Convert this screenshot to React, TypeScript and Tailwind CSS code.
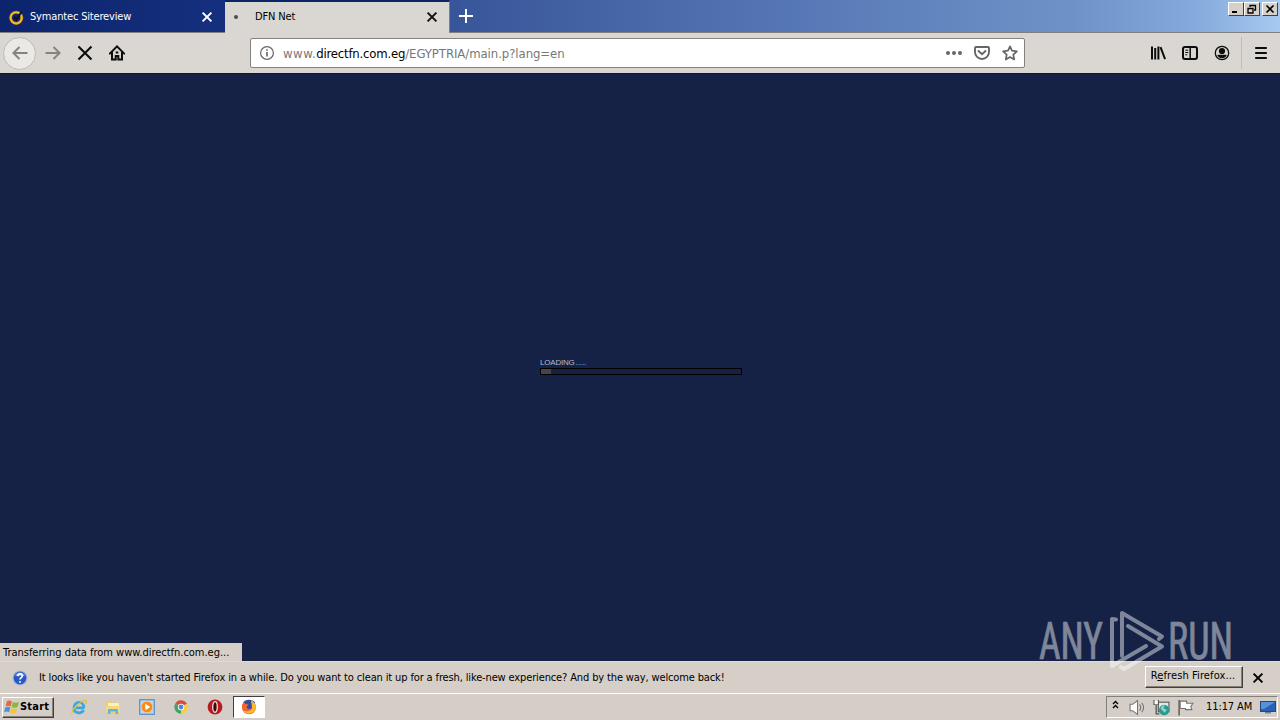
import type { ReactNode } from 'react';

const UI_FONT = "font-['DejaVu_Sans_Condensed','DejaVu_Sans',sans-serif] [font-stretch:condensed]";

function Svg({ size = 16, children, className = '' }: { size?: number; children: ReactNode; className?: string }) {
    return (
        <svg width={size} height={size} viewBox="0 0 16 16" fill="none" stroke="currentColor" strokeWidth="2" className={`block shrink-0 ${className}`}>
            {children}
        </svg>
    );
}

function CloseIcon({ className = '' }: { className?: string }) {
    return (
        <Svg className={className}>
            <path d="M3.6 3.6l8.8 8.8M12.4 3.6l-8.8 8.8" />
        </Svg>
    );
}

function WindowButton({ children }: { children: ReactNode }) {
    return (
        <div className="flex h-[14px] w-4 items-center justify-center border border-t-white border-r-[#404040] border-b-[#404040] border-l-white bg-[#d6d0c8] text-black">
            <svg width="12" height="10" viewBox="0 0 12 10" fill="none" stroke="currentColor">{children}</svg>
        </div>
    );
}

function TabStrip() {
    return (
        <div className="flex h-[33px] border-b border-[#808080] bg-[linear-gradient(90deg,#0c246c_0%,#15307f_18%,#38569a_36%,#5677b5_62%,#6f93c8_84%,#83a8da_93%,#a6caf0_100%)]">
            <div className="flex w-[225px] items-center pt-0.5 pl-2">
                <Svg className="text-[#f5b92c]">
                    <circle cx="8.2" cy="8.8" r="5.6" stroke="#8b6a24" strokeWidth="3" />
                    <circle cx="8.2" cy="8.8" r="5.6" />
                    <path d="M6 8l2.3 2.7L13.5 3" stroke="#0a0f24" />
                </Svg>
                <span className="ml-1.5 w-[169px] text-[11px] tracking-[-0.17px] text-white">Symantec Sitereview</span>
                <CloseIcon className="text-white" />
            </div>
            <div className="h-[33px] w-[225px] border-t-2 border-r border-t-[#0a2565] border-r-[#808080] bg-[#dad7d2]">
                <div className="flex h-[30px] items-center pl-[9px]">
                    <div className="size-1 rounded-full bg-[#4e4c4a]" />
                    <span className="ml-[17px] w-[169px] pt-px text-[11px] tracking-[-0.15px] text-black">DFN Net</span>
                    <CloseIcon className="text-[#111]" />
                </div>
            </div>
            <div className="flex w-8 items-center justify-center text-white">
                <Svg><path d="M8 1v14M1 8h14" /></Svg>
            </div>
            <div className="mt-0.5 mr-0.5 ml-auto flex">
                <WindowButton><path d="M2 8h5" strokeWidth="2" /></WindowButton>
                <WindowButton><path d="M4 3V1.5h5.5V6H8M2 4.5h5V9H2zM4 1.5h5.5" strokeWidth="1.3" /></WindowButton>
                <div className="ml-0.5">
                    <WindowButton><path d="M2.5 1.5l7 7M9.5 1.5l-7 7" strokeWidth="1.7" /></WindowButton>
                </div>
            </div>
        </div>
    );
}

function AddressBar() {
    return (
        <div className="ml-[125px] flex h-[30px] w-[775px] items-center rounded-[2px] border border-[#85827e] bg-white pl-2">
            <Svg className="text-[#666]">
                <circle cx="8" cy="8" r="6.4" strokeWidth="1.2" />
                <path d="M8 7v4.5M8 4.2v1.6" strokeWidth="1.6" />
            </Svg>
            <span className="ml-2 w-[663px] pt-px text-[13px] tracking-[-0.06px] whitespace-nowrap text-[#777]">
                <span className="tracking-[0.5px]">www.</span>
                <span className="tracking-[-0.2px] text-black">directfn.com.eg</span>/EGYPTRIA/main.p?lang=en
            </span>
            <div className="flex gap-3 text-[#666]">
                <Svg>
                    <g fill="currentColor" stroke="none">
                        <circle cx="2" cy="8" r="2" /><circle cx="8" cy="8" r="2" /><circle cx="14" cy="8" r="2" />
                    </g>
                </Svg>
                <Svg>
                    <path d="M2 2h12a1 1 0 0 1 1 1v4a7 7 0 0 1-14 0V3a1 1 0 0 1 1-1zM4.5 6L8 9.3 11.5 6" strokeWidth="1.9" strokeLinecap="round" />
                </Svg>
                <Svg>
                    <path d="M8 1.3l2 4.4 4.9.6-3.6 3.3.9 4.9L8 12.1l-4.2 2.4.9-4.9L1.1 6.3 6 5.7z" strokeWidth="1.7" strokeLinejoin="round" />
                </Svg>
            </div>
        </div>
    );
}

function Toolbar() {
    return (
        <div className="flex h-10 items-center bg-[#dad7d2] text-[#0c0c0d]">
            <div className="ml-[3px] flex size-[33px] items-center justify-center rounded-full border border-[#bdbab5] bg-[#ebe9e6] text-[#85837f]">
                <Svg><path d="M15.5 8H1.5M7.500 2L1.400 8l6.100 6" /></Svg>
            </div>
            <Svg className="ml-[9px] text-[#85837f]"><path d="M.5 8h14M8.500 2l6.100 6-6.100 6" /></Svg>
            <Svg className="ml-4"><path d="M1.500 1.500l13 13M14.500 1.500l-13 13" strokeWidth="2.1" /></Svg>
            <Svg className="ml-4">
                <path d="M.8 8.600L8 1.400l7.200 7.200" strokeLinecap="round" />
                <path d="M3 7v7.500h3.700V11h2.600v3.500H13V7" />
                <path d="M6.700 7.500h2.600" />
            </Svg>
            <AddressBar />
            <div className="ml-[125px] flex gap-4">
                <Svg>
                    <path d="M2 1.500v13M5.200 3v11.500M8.400 1.500v13M10.500 2.200l4.600 12" />
                </Svg>
                <Svg>
                    <rect x="1" y="2" width="14" height="12" rx="2" />
                    <path d="M8.200 2v12" strokeWidth="1.5" />
                    <path d="M3.300 5.200h3M3.300 7.500h3M3.300 9.800h2" strokeWidth="1" />
                </Svg>
                <Svg>
                    <circle cx="8" cy="8" r="6.7" strokeWidth="1.3" />
                    <g fill="currentColor" stroke="none">
                        <circle cx="8" cy="6" r="3.1" />
                        <path d="M3.200 10.200C4.600 9.400 6 9.800 8 9.800s3.400-.4 4.800.4C11.800 12.300 10 13.200 8 13.200s-3.800-.9-4.800-3z" />
                    </g>
                </Svg>
            </div>
            <div className="ml-[11px] h-8 w-px bg-[#bfbcb7]" />
            <Svg className="ml-[11px]"><path d="M2.200 3h11.600M2.200 8h11.600M2.200 13h11.600" /></Svg>
        </div>
    );
}

function Watermark() {
    return (
        <svg
            width="204" height="66" viewBox="0 0 204 66"
            className="absolute top-[608px] left-[1034px] opacity-45"
        >
            <g fill="#fff" stroke="#fff" strokeWidth=".7" fontFamily="Roboto, sans-serif" fontSize="52">
                <text x="5" y="51" textLength="64" lengthAdjust="spacingAndGlyphs">ANY</text>
                <text x="134" y="51" textLength="65" lengthAdjust="spacingAndGlyphs">RUN</text>
            </g>
            <g fill="none" stroke="#fff" strokeWidth="4" strokeLinejoin="round" strokeLinecap="round">
                <path d="M82 11.500L78 11V58l34-20" />
                <path d="M88 48V5l40 23.500-3 2.500" />
                <path d="M94 18l34 20.500L90 61l-3-2" />
            </g>
        </svg>
    );
}

function Viewport() {
    return (
        <div className="flex h-[588px] flex-col border-t border-[#101831] bg-[#152246]">
            <div className="mt-[283px] ml-[540px] w-[202px]">
                <div className="flex h-[11px] items-center font-['Liberation_Sans',Arial,sans-serif] text-[8px] leading-[11px] text-[#b3bac9]">
                    <span className="tracking-[-0.2px]">LOADING</span><span className="ml-[1px] tracking-[-0.1px]">.....</span>
                </div>
                <div className="h-[7px] border border-black">
                    <div className="h-full w-[10px] bg-[#45464a]" />
                </div>
            </div>
            <div className="mt-auto flex h-[18px] w-[242px] items-center bg-[#d5cfc8] pt-0.5 pl-[3px] text-[11px] tracking-[-0.02px] whitespace-nowrap text-black">
                Transferring data from www.directfn.com.eg...
            </div>
        </div>
    );
}

function NotificationBar() {
    return (
        <div className="flex h-8 items-center border-t border-[#dcdadf] bg-[#d5cfc7] text-[11px] text-black">
            <Svg className="ml-3">
                <circle cx="8" cy="8" r="7" fill="#2858c4" stroke="#a9b8d9" strokeWidth="1.2" />
                <path d="M3 6a5.300 5.300 0 0 1 10 0z" fill="#779be5" stroke="none" />
                <path d="M5.800 6.200c0-3.200 4.600-3 4.600-.4C10.400 7.600 8 7.600 8 9.600M8 11v1.700" stroke="#fff" strokeWidth="1.700" />
            </Svg>
            <span className="ml-[11px] pt-px tracking-[-0.135px] whitespace-nowrap">
                It looks like you haven't started Firefox in a while. Do you want to clean it up for a fresh, like-new experience? And by the way, welcome back!
            </span>
            <div className="mr-[7px] mb-0.5 ml-auto flex h-[22px] w-[98px] items-center justify-center border border-t-white border-r-[#404040] border-b-[#404040] border-l-white shadow-[inset_-1px_-1px_0_#858078]">
                <span className="mr-0.5 tracking-[0.1px] whitespace-nowrap">R<u className="underline-offset-1">e</u>fresh Firefox...</span>
            </div>
            <CloseIcon className="mr-[14px]" />
        </div>
    );
}

function StartFlag() {
    return (
        <svg width="16" height="16" viewBox="0 0 16 16" className="shrink-0">
            <path d="M3 2c2-1 3-.5 5 .5L6.700 7.500C5 6.500 3.500 6.500 1.700 7.300z" fill="#ea6738" />
            <path d="M9 3c2 1 3.500 1 6 0l-1.500 5c-2 1-4 .8-5.800 0z" fill="#7dbb42" />
            <path d="M1.400 8.300c2-.8 3.500-.7 5 .2L5 13.300c-2-1-3.300-1-5 0z" fill="#4c91d9" />
            <path d="M7.400 9c2 .9 3.800 1 5.800.2L11.700 14c-2 .9-3.700.7-5.600-.2z" fill="#f6c437" />
        </svg>
    );
}

const QUICK_LAUNCH = [
    {
        name: 'explorer',
        icon: (
            <>
                <path d="M13.500 8.800H4.800M13 8.500C12.500 1.500 3.800 2 3 8.600c-.5 6 7.500 6.700 9.600 2.500" stroke="#3ba7df" strokeWidth="2.700" />
                <path d="M1.300 14.500C-.5 11 10 1 15 1.600c1 .3.500 2-.3 3.400" stroke="#e5be3e" strokeWidth="1.300" />
            </>
        ),
    },
    {
        name: 'files',
        icon: (
            <g stroke="none">
                <path d="M1 2h5l1 1.500h7V14H1z" fill="#e9cf72" />
                <path d="M3 4h11v6H3z" fill="#fbf0b9" />
                <path d="M1 7h14v6H1z" fill="#f2da80" />
                <path d="M3 15v-4q0-1 1-1h8q1 0 1 1v4h-2.500v-2.500h-5V15z" fill="#62b2df" />
            </g>
        ),
    },
    {
        name: 'media',
        icon: (
            <>
                <rect x=".7" y=".7" width="14.600" height="14.600" fill="#b9d7ee" stroke="#5c94c8" strokeWidth="1.300" />
                <circle cx="8" cy="8" r="5.700" fill="#f58b1b" stroke="#ffd09a" strokeWidth=".6" />
                <path d="M6.300 4.800v6.400L11.300 8z" fill="#fff" stroke="none" />
            </>
        ),
    },
    {
        name: 'chrome',
        icon: (
            <g stroke="none">
                <path d="M8 8L2.200 4.700A6.700 6.700 0 0 1 13.900 4.800z" fill="#dc4a3d" />
                <path d="M8 8l5.900-3.200A6.700 6.700 0 0 1 8 14.700z" fill="#f6cd46" />
                <path d="M8 8v6.700A6.700 6.700 0 0 1 2.200 4.700z" fill="#43a45b" />
                <circle cx="8" cy="8" r="3.200" fill="#fff" /><circle cx="8" cy="8" r="2.400" fill="#4689e8" />
            </g>
        ),
    },
    {
        name: 'opera',
        icon: (
            <>
                <circle cx="8" cy="8" r="7.400" fill="#b51d23" stroke="none" />
                <ellipse cx="8" cy="8" rx="2.300" ry="5.300" fill="#42080c" stroke="#f2dddd" strokeWidth="1.300" />
            </>
        ),
    },
];

function Taskbar() {
    return (
        <div className="flex h-[27px] items-center border-t border-white bg-[#d5cdc7] text-black">
            <div className="ml-0.5 flex h-[21px] w-[52px] items-center border border-t-white border-r-[#404040] border-b-[#404040] border-l-white pl-px shadow-[inset_-1px_-1px_0_#858078]">
                <StartFlag />
                <span className="pt-px text-[11px] font-bold tracking-[0.2px]">Start</span>
            </div>
            <div className="ml-[17px] flex gap-[18px]">
                {QUICK_LAUNCH.map((item) => (
                    <Svg key={item.name}>{item.icon}</Svg>
                ))}
            </div>
            <div className="ml-[10px] flex h-[22px] w-8 items-center justify-center border border-t-[#404040] border-r-white border-b-white border-l-[#404040] bg-white">
                <Svg>
                    <circle cx="8" cy="8.300" r="7" fill="#ee542b" stroke="none" />
                    <path d="M2 4C4-.5 12-.3 14.300 4L9 7z" fill="#304e9d" stroke="none" />
                    <circle cx="8.500" cy="7.500" r="3.500" fill="#384aa5" stroke="none" />
                    <path d="M10 1c5 3 6.500 8 3 11.500S4 15 2 11c4 2.500 9 1 9-3z" fill="#fdba2d" stroke="none" />
                    <path d="M1 8c0-3 1-4 2-5l1.500 2 3 .5L5.500 8c1 3 3 2 4.500 1.600-1 3-7 3-9-1.600z" fill="#f4662c" stroke="none" />
                </Svg>
            </div>
            <div className="mr-0.5 ml-auto flex h-[22px] w-[172px] items-center border border-t-[#858078] border-r-white border-b-white border-l-[#858078]">
                <svg width="7" height="10" viewBox="0 0 7 10" fill="none" stroke="#000" strokeWidth="1.400" className="mb-1 ml-[5px]">
                    <path d="M1 4l2.500-2.500L6 4M1 8l2.500-2.500L6 8" />
                </svg>
                <Svg size={17} className="ml-[10px]">
                    <path d="M1 5h2.500L8 1.500v13L3.500 11H1z" fill="#fff" stroke="#77736e" strokeWidth="1" />
                    <path d="M10 5q2 3 0 6M12 3.500q3.500 4.500 0 9" stroke="#77736e" strokeWidth="1" />
                </Svg>
                <Svg size={17} className="ml-[7px]">
                    <rect x="5" y="3" width="10" height="9" fill="#dcebe8" stroke="#555" strokeWidth="1" />
                    <path d="M1 1v4h4V1M3 5v9h3" stroke="#555" strokeWidth="1.200" />
                    <path d="M1.500 1.500h3V5h-3z" fill="#fff" stroke="none" />
                    <circle cx="10.500" cy="10.300" r="4.900" fill="#2b9b91" stroke="none" />
                    <path d="M7 9q2-4 4-3l-1 3 3 1-2 3z" fill="#8bd5c8" stroke="none" />
                </Svg>
                <Svg size={17} className="ml-[7px]">
                    <path d="M2 1v14.500" stroke="#68645f" strokeWidth="1.500" />
                    <path d="M3 2h6v2h6l-2 3 1 3H8V9H3z" fill="#fff" stroke="#77736e" strokeWidth="1" />
                </Svg>
                <span className="ml-[12px] w-[54px] pt-px text-[11px] tracking-[-0.1px] whitespace-nowrap">11:17 AM</span>
                <svg width="16" height="14" viewBox="0 0 16 14" className="block shrink-0">
                    <rect x=".5" y="1.500" width="15" height="10" fill="#2762b5" stroke="#24477c" />
                    <path d="M1 2h14L4 9H1z" fill="#5691d9" />
                    <path d="M5 12h6v1.500H5z" fill="#758295" />
                </svg>
            </div>
        </div>
    );
}

export default function App() {
    return (
        <div className={`relative h-[720px] w-[1280px] overflow-hidden ${UI_FONT}`}>
            <TabStrip />
            <Toolbar />
            <Viewport />
            <NotificationBar />
            <Taskbar />
            <Watermark />
        </div>
    );
}
